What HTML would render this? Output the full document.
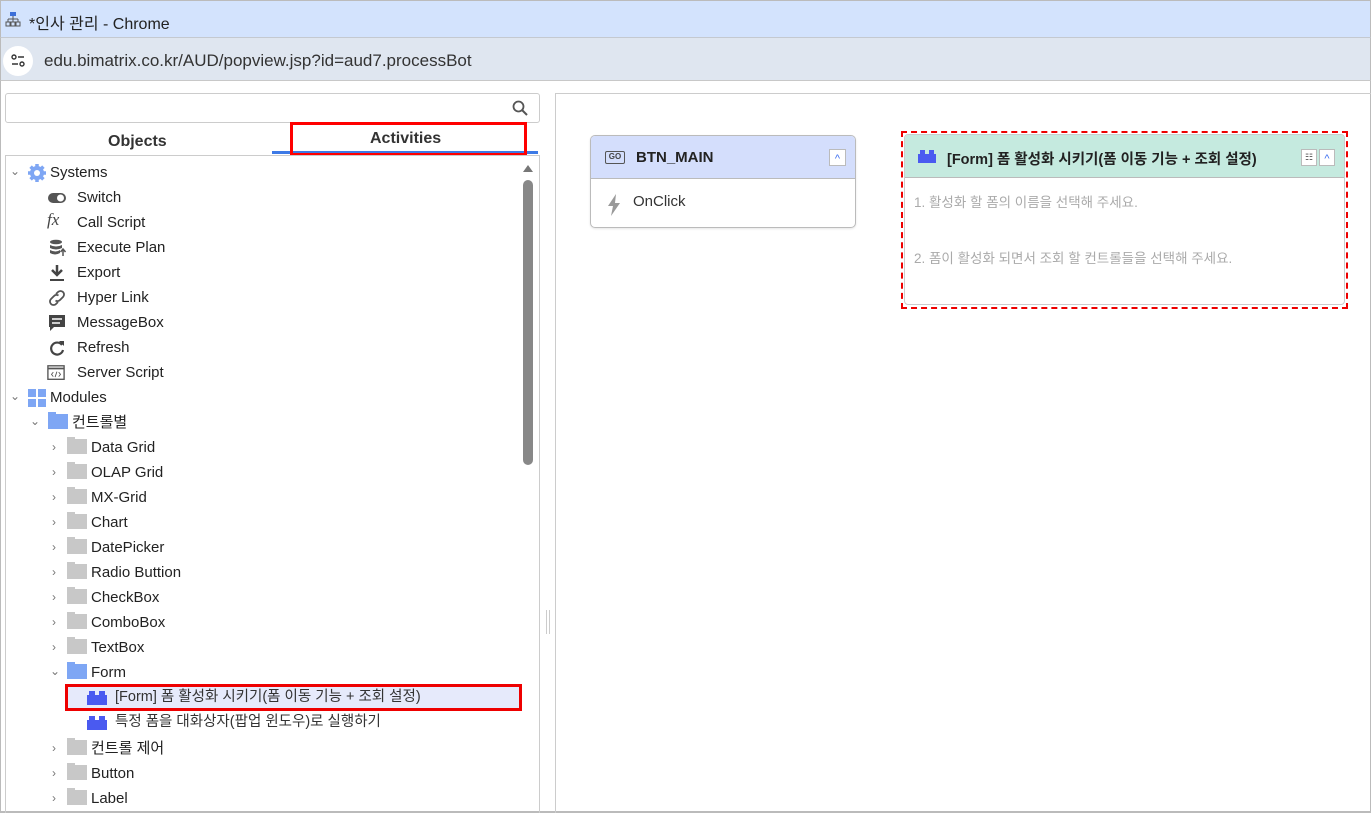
<!DOCTYPE html>
<html><head><meta charset="utf-8"><style>
*{margin:0;padding:0;box-sizing:border-box}
body{width:1371px;height:813px;overflow:hidden;background:#fff;font-family:"Liberation Sans","Noto Sans CJK KR",sans-serif;position:relative;color:#222}
.a{position:absolute}
.title{left:0;top:0;width:1371px;height:38px;background:#d3e3fd;border:1px solid #bbb;border-bottom:1px solid #c4c9d0}
.addr{left:0;top:38px;width:1371px;height:43px;background:#dfe6f0;border-left:1px solid #bbb;border-right:1px solid #bbb;border-bottom:1px solid #c8c8c8}
.tree{position:absolute;left:0;top:1px;width:540px;height:812px}
.row{position:absolute;font-size:15px;height:25px;line-height:25px;white-space:nowrap;color:#222}
.fold{display:inline-block;width:20px;height:15px;background:#c8c8c8;vertical-align:-2px;margin-right:4px;position:relative}
.fold:before{content:"";position:absolute;left:0;top:-2px;width:8px;height:3px;background:#c8c8c8}
.fold.b,.fold.b:before{background:#7ea6f4}
.car{position:absolute;font-size:12px;color:#777}
.ic{position:absolute;width:18px;height:18px}
</style></head><body>
<div class="a title"></div>
<svg class="a" style="left:5px;top:11px" width="16" height="16" viewBox="0 0 16 16"><rect x="5" y="1" width="6" height="4" fill="#3c6fd8"/><path d="M8 5v3M3 8h10M3 8v3M8 8v3M13 8v3" stroke="#555" fill="none"/><rect x="1" y="11" width="4" height="4" fill="none" stroke="#555"/><rect x="6" y="11" width="4" height="4" fill="none" stroke="#555"/><rect x="11" y="11" width="4" height="4" fill="none" stroke="#555"/></svg>
<div class="a" style="left:29px;top:10px;font-size:16px;color:#222">*인사 관리 - Chrome</div>
<div class="a addr"></div>
<div class="a" style="left:3px;top:46px;width:30px;height:30px;border-radius:15px;background:#fff"></div>
<svg class="a" style="left:10px;top:53px" width="16" height="16" viewBox="0 0 16 16"><circle cx="4" cy="4" r="2" fill="none" stroke="#333" stroke-width="1.4"/><path d="M8 4h6M2 11h6" stroke="#333" stroke-width="1.4"/><circle cx="12" cy="11" r="2" fill="none" stroke="#333" stroke-width="1.4"/></svg>
<div class="a" style="left:44px;top:51px;font-size:17px;color:#333">edu.bimatrix.co.kr/AUD/popview.jsp?id=aud7.processBot</div>
<div class="a" style="left:0;top:81px;width:1px;height:732px;background:#bbb"></div>
<div class="a" style="left:1370px;top:81px;width:1px;height:732px;background:#bbb"></div>
<div class="a" style="left:0;top:811px;width:1371px;height:2px;background:#bbb"></div>
<div class="a" style="left:5px;top:93px;width:535px;height:30px;border:1px solid #ccc;border-radius:3px;background:#fff"></div>
<svg class="a" style="left:512px;top:100px" width="16" height="16" viewBox="0 0 16 16"><circle cx="6.5" cy="6.5" r="5" fill="none" stroke="#555" stroke-width="1.8"/><path d="M10 10l5 5" stroke="#555" stroke-width="2"/></svg>
<div class="a" style="left:108px;top:133px;font-size:16px;font-weight:bold;color:#333">Objects</div>
<div class="a" style="left:370px;top:130px;font-size:16px;font-weight:bold;color:#333">Activities</div>
<div class="a" style="left:272px;top:151px;width:266px;height:3px;background:#3d7ae6"></div>
<div class="a" style="left:290px;top:122px;width:237px;height:34px;border:3px solid #f00"></div>
<div class="a" style="left:5px;top:155px;width:535px;height:658px;border:1px solid #ccc;border-bottom:none"></div>
<svg class="a" style="left:522px;top:163px" width="12" height="10"><path d="M1 9L6 2L11 9Z" fill="#777"/></svg>
<div class="a" style="left:523px;top:180px;width:10px;height:285px;border-radius:5px;background:#888"></div>
<div class="a" style="left:546px;top:610px;width:1px;height:24px;background:#ccc"></div>
<div class="a" style="left:549px;top:610px;width:1px;height:24px;background:#ccc"></div>
<div class="tree">
<div class="car" style="left:10px;top:163px">⌄</div>
<svg class="a" style="left:27px;top:162px" width="20" height="20" viewBox="0 0 20 20"><circle cx="10" cy="10" r="7" fill="#7ea6f4"/><g stroke="#7ea6f4" stroke-width="3.5"><path d="M10 1v18M1 10h18M3.6 3.6l12.8 12.8M16.4 3.6L3.6 16.4"/></g><circle cx="10" cy="10" r="3" fill="#fff"/></svg>
<div class="row" style="left:50px;top:159px">Systems</div>
<svg class="ic" style="left:48px;top:188px" viewBox="0 0 18 18"><rect x="0" y="4" width="18" height="10" rx="5" fill="#555"/><circle cx="12.5" cy="9" r="3.5" fill="#fff"/></svg>
<div class="row" style="left:77px;top:184px">Switch</div>
<div class="a" style="left:47px;top:209px;font-size:17px;font-style:italic;font-family:'Liberation Serif',serif;color:#444">fx</div>
<div class="row" style="left:77px;top:209px">Call Script</div>
<svg class="ic" style="left:48px;top:238px" viewBox="0 0 18 18"><ellipse cx="8" cy="3" rx="6" ry="2.3" fill="#555"/><path d="M2 6q6 3 12 0v3q-6 3-12 0zM2 11q6 3 10 0v3q-5 3-10 0z" fill="#555"/><path d="M15 17v-6M12.5 13l2.5-3 2.5 3" stroke="#555" fill="none" stroke-width="1.5"/></svg>
<div class="row" style="left:77px;top:234px">Execute Plan</div>
<svg class="ic" style="left:48px;top:263px" viewBox="0 0 18 18"><path d="M9 1v9M4 6l5 5 5-5" stroke="#444" stroke-width="2.5" fill="none"/><path d="M2 16h14" stroke="#444" stroke-width="2"/></svg>
<div class="row" style="left:77px;top:259px">Export</div>
<svg class="ic" style="left:48px;top:288px" viewBox="0 0 18 18"><g fill="none" stroke="#555" stroke-width="1.8"><path d="M8 5l2-2a3.5 3.5 0 015 5l-3 3a3.5 3.5 0 01-4.5 .5"/><path d="M10 13l-2 2a3.5 3.5 0 01-5-5l3-3a3.5 3.5 0 014.5-.5"/></g></svg>
<div class="row" style="left:77px;top:284px">Hyper Link</div>
<svg class="ic" style="left:48px;top:313px" viewBox="0 0 18 18"><path d="M1 1h16v12h-11l-4 4v-4h-1z" fill="#444"/><path d="M4 5h10M4 9h8" stroke="#fff" stroke-width="1.5"/></svg>
<div class="row" style="left:77px;top:309px">MessageBox</div>
<svg class="ic" style="left:48px;top:338px" viewBox="0 0 18 18"><path d="M14 6A6 6 0 1 0 15 11" fill="none" stroke="#444" stroke-width="2.2"/><path d="M11 2h5v5z" fill="#444"/></svg>
<div class="row" style="left:77px;top:334px">Refresh</div>
<svg class="ic" style="left:47px;top:363px" viewBox="0 0 20 18"><rect x="1" y="1" width="18" height="15" fill="none" stroke="#555" stroke-width="1.5"/><path d="M1 4h18" stroke="#555" stroke-width="2"/><path d="M7 8l-2 2.5 2 2.5M13 8l2 2.5-2 2.5M11 7.5l-2 6" stroke="#555" fill="none"/></svg>
<div class="row" style="left:77px;top:359px">Server Script</div>
<div class="car" style="left:10px;top:388px">⌄</div>
<svg class="a" style="left:28px;top:388px" width="18" height="18"><rect x="0" y="0" width="8" height="8" fill="#7ea6f4"/><rect x="10" y="0" width="8" height="8" fill="#7ea6f4"/><rect x="0" y="10" width="8" height="8" fill="#7ea6f4"/><rect x="10" y="10" width="8" height="8" fill="#7ea6f4"/></svg>
<div class="row" style="left:50px;top:384px">Modules</div>
<div class="car" style="left:30px;top:413px">⌄</div>
<div class="row" style="left:48px;top:409px"><span class="fold b"></span>컨트롤별</div>
<div class="car" style="left:52px;top:439px">›</div><div class="row" style="left:67px;top:434px"><span class="fold"></span>Data Grid</div>
<div class="car" style="left:52px;top:464px">›</div><div class="row" style="left:67px;top:459px"><span class="fold"></span>OLAP Grid</div>
<div class="car" style="left:52px;top:489px">›</div><div class="row" style="left:67px;top:484px"><span class="fold"></span>MX-Grid</div>
<div class="car" style="left:52px;top:514px">›</div><div class="row" style="left:67px;top:509px"><span class="fold"></span>Chart</div>
<div class="car" style="left:52px;top:539px">›</div><div class="row" style="left:67px;top:534px"><span class="fold"></span>DatePicker</div>
<div class="car" style="left:52px;top:564px">›</div><div class="row" style="left:67px;top:559px"><span class="fold"></span>Radio Buttion</div>
<div class="car" style="left:52px;top:589px">›</div><div class="row" style="left:67px;top:584px"><span class="fold"></span>CheckBox</div>
<div class="car" style="left:52px;top:614px">›</div><div class="row" style="left:67px;top:609px"><span class="fold"></span>ComboBox</div>
<div class="car" style="left:52px;top:639px">›</div><div class="row" style="left:67px;top:634px"><span class="fold"></span>TextBox</div>
<div class="car" style="left:50px;top:663px">⌄</div><div class="row" style="left:67px;top:659px"><span class="fold b"></span>Form</div>
<div class="a" style="left:65px;top:683px;width:457px;height:27px;background:#e6eafb;border:3px solid #e00"></div>
<svg class="a" style="left:87px;top:690px" width="20" height="14"><rect x="0" y="4" width="20" height="10" fill="#4a5af0"/><rect x="2" y="0" width="6" height="5" fill="#4a5af0"/><rect x="12" y="0" width="6" height="5" fill="#4a5af0"/></svg>
<div class="row" style="left:115px;top:684px;font-size:14.5px;color:#333">[Form] 폼 활성화 시키기(폼 이동 기능 + 조회 설정)</div>
<svg class="a" style="left:87px;top:715px" width="20" height="14"><rect x="0" y="4" width="20" height="10" fill="#4a5af0"/><rect x="2" y="0" width="6" height="5" fill="#4a5af0"/><rect x="12" y="0" width="6" height="5" fill="#4a5af0"/></svg>
<div class="row" style="left:115px;top:709px;font-size:14.5px;color:#333">특정 폼을 대화상자(팝업 윈도우)로 실행하기</div>
<div class="car" style="left:52px;top:740px">›</div><div class="row" style="left:67px;top:735px"><span class="fold"></span>컨트롤 제어</div>
<div class="car" style="left:52px;top:765px">›</div><div class="row" style="left:67px;top:760px"><span class="fold"></span>Button</div>
<div class="car" style="left:52px;top:790px">›</div><div class="row" style="left:67px;top:785px"><span class="fold"></span>Label</div>
</div>
<div class="a" style="left:555px;top:93px;width:816px;height:720px;border-left:1px solid #ccc;border-top:1px solid #ccc"></div>
<div class="a" style="left:590px;top:135px;width:266px;height:93px;border:1px solid #bbb;border-radius:5px;overflow:hidden;box-shadow:0 1px 2px rgba(0,0,0,.1)">
 <div style="height:43px;background:#d4defc;border-bottom:1px solid #bbb;position:relative">
  <div style="position:absolute;left:14px;top:15px;width:20px;height:13px;border:1.5px solid #555;border-radius:2px;font-size:8px;line-height:10px;text-align:center;color:#444;font-weight:bold">GO</div>
  <div style="position:absolute;left:45px;top:13px;font-size:15px;font-weight:bold;color:#222">BTN_MAIN</div>
  <div style="position:absolute;left:238px;top:13px;width:17px;height:17px;background:#fff;border:1px solid #bbb;color:#3d6ff0;font-size:11px;text-align:center;line-height:18px">^</div>
 </div>
 <svg style="position:absolute;left:16px;top:58px" width="14" height="22" viewBox="0 0 14 22"><path d="M9 0L1 12h5l-2 10 9-13H8z" fill="#999"/></svg>
 <div style="position:absolute;left:42px;top:57px;font-size:15px;color:#333">OnClick</div>
</div>
<div class="a" style="left:901px;top:131px;width:447px;height:178px;border:2px dashed #e00"></div>
<div class="a" style="left:904px;top:134px;width:441px;height:171px;border:1px solid #ccc;border-radius:4px;overflow:hidden">
 <div style="height:43px;background:#c5eadf;border-bottom:1px solid #bbb;position:relative">
  <svg style="position:absolute;left:13px;top:15px" width="18" height="13"><rect x="0" y="4" width="18" height="9" fill="#4a5af0"/><rect x="2" y="0" width="5" height="5" fill="#4a5af0"/><rect x="11" y="0" width="5" height="5" fill="#4a5af0"/></svg>
  <div style="position:absolute;left:42px;top:13px;font-size:14.5px;font-weight:bold;color:#222">[Form] 폼 활성화 시키기(폼 이동 기능 + 조회 설정)</div>
  <div style="position:absolute;left:396px;top:14px;width:16px;height:17px;background:#fff;border:1px solid #bbb;font-size:9px;text-align:center;line-height:15px;color:#555">☷</div>
  <div style="position:absolute;left:414px;top:14px;width:16px;height:17px;background:#fff;border:1px solid #bbb;color:#3d6ff0;font-size:11px;text-align:center;line-height:18px">^</div>
 </div>
 <div style="position:absolute;left:9px;top:56px;font-size:13.5px;color:#aaa">1. 활성화 할 폼의 이름을 선택해 주세요.</div>
 <div style="position:absolute;left:9px;top:112px;font-size:13.5px;color:#aaa">2. 폼이 활성화 되면서 조회 할 컨트롤들을 선택해 주세요.</div>
</div>
</body></html>
